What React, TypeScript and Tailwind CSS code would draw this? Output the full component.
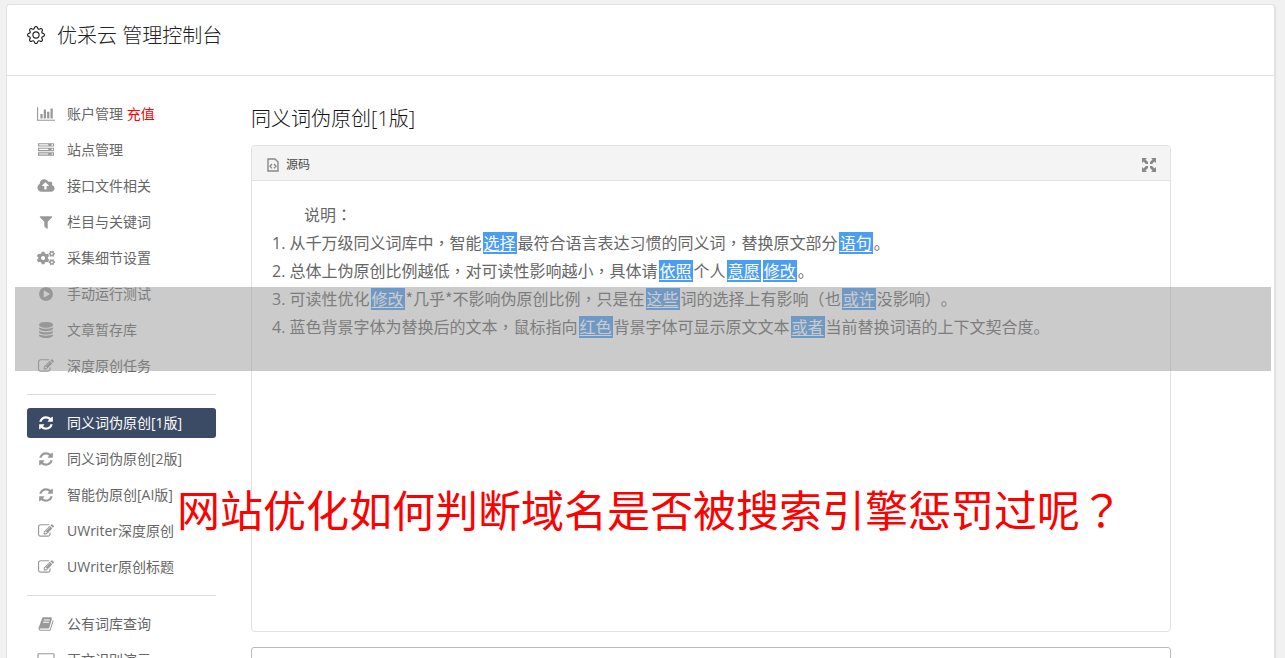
import type { ReactNode } from 'react'
import { BsGear } from 'react-icons/bs'
import { FaCogs } from 'react-icons/fa'
import { clsx } from 'clsx'

const icons = {
  chart:
    'M640 896v512h-256v-512h256zm384-512v1024h-256v-1024h256zm1024 1152v128h-2048v-1536h128v1408h1920zm-640-896v768h-256v-768h256zm384-384v1152h-256v-1152h256z',
  server:
    'M128 1408h1024v-128h-1024v128zm0-512h1024v-128h-1024v128zm1568 448q0-40-28-68t-68-28-68 28-28 68 28 68 68 28 68-28 28-68zm-1568-960h1024v-128h-1024v128zm1568 448q0-40-28-68t-68-28-68 28-28 68 28 68 68 28 68-28 28-68zm0-512q0-40-28-68t-68-28-68 28-28 68 28 68 68 28 68-28 28-68zm96 832v384h-1792v-384h1792zm0-512v384h-1792v-384h1792zm0-512v384h-1792v-384h1792z',
  upload:
    'M1280 864q0-14-9-23l-352-352q-9-9-23-9t-23 9l-351 351q-10 12-10 24 0 14 9 23t23 9h224v352q0 13 9.5 22.5t22.5 9.5h192q13 0 22.5-9.5t9.5-22.5v-352h224q13 0 22.5-9.5t9.5-22.5zm640 288q0 159-112.5 271.5t-271.5 112.5h-1088q-185 0-316.5-131.5t-131.5-316.5q0-130 70-240t188-165q-2-30-2-43 0-212 150-362t362-150q156 0 285.5 87t188.5 231q71-62 166-62 106 0 181 75t75 181q0 76-41 138 130 31 213.5 135.5t83.5 238.5z',
  filter:
    'M1595 295q17 41-14 70l-493 493v742q0 42-39 59-13 5-25 5-27 0-45-19l-256-256q-19-19-19-45v-486l-493-493q-31-29-14-70 17-39 59-39h1280q42 0 59 39z',
  play: 'M896 128q209 0 385.5 103t279.5 279.5 103 385.5-103 385.5-279.5 279.5-385.5 103-385.5-103-279.5-279.5-103-385.5 103-385.5 279.5-279.5 385.5-103zm384 823q32-18 32-55t-32-55l-544-320q-31-19-64-1-32 19-32 56v640q0 37 32 56 16 8 32 8 17 0 32-9z',
  database:
    'M896 768q237 0 443-43t325-127v170q0 69-103 128t-280 93.5-385 34.5-385-34.5-280-93.5-103-128v-170q119 84 325 127t443 43zm0 768q237 0 443-43t325-127v170q0 69-103 128t-280 93.5-385 34.5-385-34.5-280-93.5-103-128v-170q119 84 325 127t443 43zm0-384q237 0 443-43t325-127v170q0 69-103 128t-280 93.5-385 34.5-385-34.5-280-93.5-103-128v-170q119 84 325 127t443 43zm0-1152q208 0 385 34.5t280 93.5 103 128v128q0 69-103 128t-280 93.5-385 34.5-385-34.5-280-93.5-103-128v-128q0-69 103-128t280-93.5 385-34.5z',
  edit: 'M888 1184l116-116-152-152-116 116v56h96v96h56zm440-720q-16-16-33 1l-350 350q-17 17-1 33t33-1l350-350q17-17 1-33zm80 594v190q0 119-84.5 203.5t-203.5 84.5h-832q-119 0-203.5-84.5t-84.5-203.5v-832q0-119 84.5-203.5t203.5-84.5h832q63 0 117 25 15 7 18 23 3 17-9 29l-49 49q-14 14-32 8-23-6-45-6h-832q-66 0-113 47t-47 113v832q0 66 47 113t113 47h832q66 0 113-47t47-113v-126q0-13 9-22l64-64q15-15 35-7t20 29zm-96-738l288 288-672 672h-288v-288zm444 132l-92 92-288-288 92-92q28-28 68-28t68 28l152 152q28 28 28 68t-28 68z',
  refresh:
    'M1639 1056q0 5-1 7-64 268-268 434.5t-478 166.5q-146 0-282.5-55t-243.5-157l-129 129q-19 19-45 19t-45-19-19-45v-448q0-26 19-45t45-19h448q26 0 45 19t19 45-19 45l-137 137q71 66 161 102t187 36q134 0 250-65t186-179q11-17 53-117 8-23 30-23h192q13 0 22.5 9.5t9.5 22.5zm25-800v448q0 26-19 45t-45 19h-448q-26 0-45-19t-19-45 19-45l138-138q-148-137-349-137-134 0-250 65t-186 179q-11 17-53 117-8 23-30 23h-199q-13 0-22.5-9.5t-9.5-22.5v-7q65-268 270-434.5t480-166.5q146 0 284 55.5t245 156.5l130-129q19-19 45-19t45 19 19 45z',
  book: 'M1703 478q40 57 18 129l-275 906q-19 64-76.5 107.5t-122.5 43.5h-923q-77 0-148.5-53.5t-99.5-131.5q-24-67-2-127 0-4 3-27t4-37q1-8-3-21.5t-3-19.5q2-11 8-21t16.5-23.5 16.5-23.5q23-38 45-91.5t30-91.5q3-10 .5-30t-.5-28q3-11 17-28t17-23q21-36 42-92t25-90q1-9-2.5-32t.5-28q4-13 22-30.5t22-22.5q19-26 42.5-84.5t27.5-96.5q1-8-3-25.5t-2-26.5q2-8 9-18t18-23 17-21q8-12 16.5-30.5t15-35 16-36 19.5-32 26.5-23.5 36-11.5 47.5 5.5l-1 3q38-9 51-9h761q74 0 114 56t18 130l-274 906q-36 119-71.5 153.5t-128.5 34.5h-869q-27 0-38 15-11 16-1 43 24 70 144 70h923q29 0 56-15.5t35-41.5l300-987q7-22 5-57 38 15 59 43zm-1064 2q-4 13 2 22.5t20 9.5h608q13 0 25.5-9.5t16.5-22.5l21-64q4-13-2-22.5t-20-9.5h-608q-13 0-25.5 9.5t-16.5 22.5zm-83 256q-4 13 2 22.5t20 9.5h608q13 0 25.5-9.5t16.5-22.5l21-64q4-13-2-22.5t-20-9.5h-608q-13 0-25.5 9.5t-16.5 22.5z',
  screen:
    'M160 128h1600q66 0 113 47t47 113v1088q0 66-47 113t-113 47h-1600q-66 0-113-47t-47-113v-1088q0-66 47-113t113-47zm0 128q-32 0-32 32v1088q0 32 32 32h1600q32 0 32-32v-1088q0-32-32-32z',
}

type IconName = keyof typeof icons | 'cogs'

const viewBoxes: Partial<Record<IconName, string>> = {
  chart: '0 0 2048 1792',
  upload: '0 0 1920 1792',
  screen: '0 0 1920 1792',
}

function NavIcon({ name }: { name: IconName }) {
  if (name === 'cogs') return <FaCogs className="h-4 w-[18px]" />
  return (
    <svg
      viewBox={viewBoxes[name] ?? '0 0 1792 1792'}
      className="h-4 w-[18px]"
      fill="currentColor"
      fillRule="evenodd"
      aria-hidden="true"
    >
      <path d={icons[name]} />
    </svg>
  )
}

interface NavItem {
  name: string
  icon: IconName
  extra?: string
  active?: boolean
}

const navGroups: NavItem[][] = [
  [
    { name: '账户管理', icon: 'chart', extra: '充值' },
    { name: '站点管理', icon: 'server' },
    { name: '接口文件相关', icon: 'upload' },
    { name: '栏目与关键词', icon: 'filter' },
    { name: '采集细节设置', icon: 'cogs' },
    { name: '手动运行测试', icon: 'play' },
    { name: '文章暂存库', icon: 'database' },
    { name: '深度原创任务', icon: 'edit' },
  ],
  [
    { name: '同义词伪原创[1版]', icon: 'refresh', active: true },
    { name: '同义词伪原创[2版]', icon: 'refresh' },
    { name: '智能伪原创[AI版]', icon: 'refresh' },
    { name: 'UWriter深度原创', icon: 'edit' },
    { name: 'UWriter原创标题', icon: 'edit' },
  ],
  [
    { name: '公有词库查询', icon: 'book' },
    { name: '正文识别演示', icon: 'screen' },
  ],
]

function Sidebar() {
  return (
    <nav className="w-[189px] shrink-0 pt-[23px]">
      {navGroups.map((group, i) => (
        <ul
          key={group[0].name}
          className={clsx('flex flex-col gap-1.5', i > 0 && 'mt-[13px] border-t border-[#dcdcdc] pt-[13px]')}
        >
          {group.map((item) => (
            <li key={item.name}>
              <a
                href="#"
                className={clsx(
                  'flex h-[30px] items-center gap-3 rounded-[3px] pl-[10px] text-sm whitespace-nowrap',
                  item.active ? 'bg-[#3b4b66] text-white' : 'text-[#666]'
                )}
              >
                <span className={clsx('flex w-[18px] justify-center', item.active ? 'text-white' : 'text-[#999]')}>
                  <NavIcon name={item.icon} />
                </span>
                <span>
                  {item.name}
                  {item.extra && <span className="text-[#f00]"> {item.extra}</span>}
                </span>
              </a>
            </li>
          ))}
        </ul>
      ))}
    </nav>
  )
}

// Sets full-width punctuation centred in its cell
function Text({ children }: { children: string }) {
  return children.split(/([，：？（）*])/).map((part, i) =>
    i % 2 ? (
      <span key={i} lang="zh-TW" className="font-['Noto_Sans_CJK_TC',sans-serif] leading-none">
        {part}
      </span>
    ) : (
      part
    )
  )
}

function Word({ children }: { children: ReactNode }) {
  return <span className="mx-px bg-[#4a9df5] px-px text-white underline underline-offset-2">{children}</span>
}

function SourceIcon() {
  return (
    <svg viewBox="0 0 12 14" className="h-[14px] w-3" fill="none" stroke="#888" aria-hidden="true">
      <path d="M1 1h7l3 3v9H1z" strokeWidth="1.4" />
      <path d="M5 6L3 8.200l2 2.200M7 6l2 2.200-2 2.200" strokeWidth="1.3" />
    </svg>
  )
}

function MaximizeIcon() {
  return (
    <svg viewBox="0 0 14 14" className="size-[14px]" fill="#888" aria-hidden="true">
      <path d="M0 0h5L3.500 1.500 6 4v2H4L1.500 3.500 0 5zM14 0v5l-1.500-1.500L10 6H8V4l2.500-2.500L9 0zM0 14V9l1.500 1.500L4 8h2v2l-2.500 2.500L5 14zM14 14H9l1.500-1.500L8 10V8h2l2.500 2.500L14 9z" />
    </svg>
  )
}

function Editor() {
  return (
    <section className="rounded border border-[#e2e2e2]">
      <div className="flex h-[35px] items-center justify-between rounded-t border-b border-[#e2e2e2] bg-[#f4f4f4] pt-[3px] pr-[14px] pl-[15px]">
        <button type="button" className="flex items-center gap-[7px] text-xs text-[#484848]">
          <SourceIcon />
          源码
        </button>
        <button type="button" aria-label="最大化">
          <MaximizeIcon />
        </button>
      </div>
      <div className="h-[450px] px-5 pt-5 text-base leading-7 text-[#666]">
        <p className="pl-8">
          <Text>说明：</Text>
        </p>
        <ol className="list-inside list-decimal">
          <li>
            <Text>从千万级同义词库中，智能</Text>
            <Word>选择</Word>
            <Text>最符合语言表达习惯的同义词，替换原文部分</Text>
            <Word>语句</Word>。
          </li>
          <li>
            <Text>总体上伪原创比例越低，对可读性影响越小，具体请</Text>
            <Word>依照</Word>个人<Word>意愿</Word>
            <Word>修改</Word>。
          </li>
          <li>
            可读性优化<Word>修改</Word>
            <Text>*几乎*不影响伪原创比例，只是在</Text>
            <Word>这些</Word>
            <Text>词的选择上有影响（也</Text>
            <Word>或许</Word>
            <Text>没影响）。</Text>
          </li>
          <li>
            <Text>蓝色背景字体为替换后的文本，鼠标指向</Text>
            <Word>红色</Word>背景字体可显示原文文本<Word>或者</Word>
            当前替换词语的上下文契合度。
          </li>
        </ol>
      </div>
    </section>
  )
}

export default function App() {
  return (
    <div
      lang="zh-CN"
      className="relative h-screen overflow-hidden bg-[#f1f1f1] pt-1 pr-[9px] pl-1.5 font-['Open_Sans','Noto_Sans_CJK_SC',sans-serif] [text-spacing-trim:space-all]"
    >
      <div className="min-h-full rounded-t border border-r-2 border-[#e2e2e2] bg-white">
        <header className="flex h-[71px] items-center gap-3 border-b border-[#e2e2e2] pb-2 pl-5 text-[#222]">
          <BsGear className="mb-[3px] size-[18px]" />
          <h1 className="text-xl font-light">优采云 管理控制台</h1>
        </header>
        <div className="flex gap-[35px] pl-5">
          <Sidebar />
          <main className="max-w-[920px] flex-1 pt-7">
            <h2 className="mb-3 text-xl leading-[29px] font-light text-[#111]">同义词伪原创[1版]</h2>
            <Editor />
            <textarea
              aria-label="原文"
              className="mt-[15px] block h-40 w-full resize-none rounded-[3px] border border-[#bbb] bg-white p-2 outline-none"
            />
          </main>
        </div>
      </div>

      <div className="pointer-events-none absolute top-[287px] right-[14px] left-[15px] h-[84px] bg-[#949494]/49" />
      <p className="pointer-events-none absolute top-[479px] left-[177px] text-[43px] leading-[64px] whitespace-nowrap text-[#f00]">
        <Text>网站优化如何判断域名是否被搜索引擎惩罚过呢？</Text>
      </p>
    </div>
  )
}
